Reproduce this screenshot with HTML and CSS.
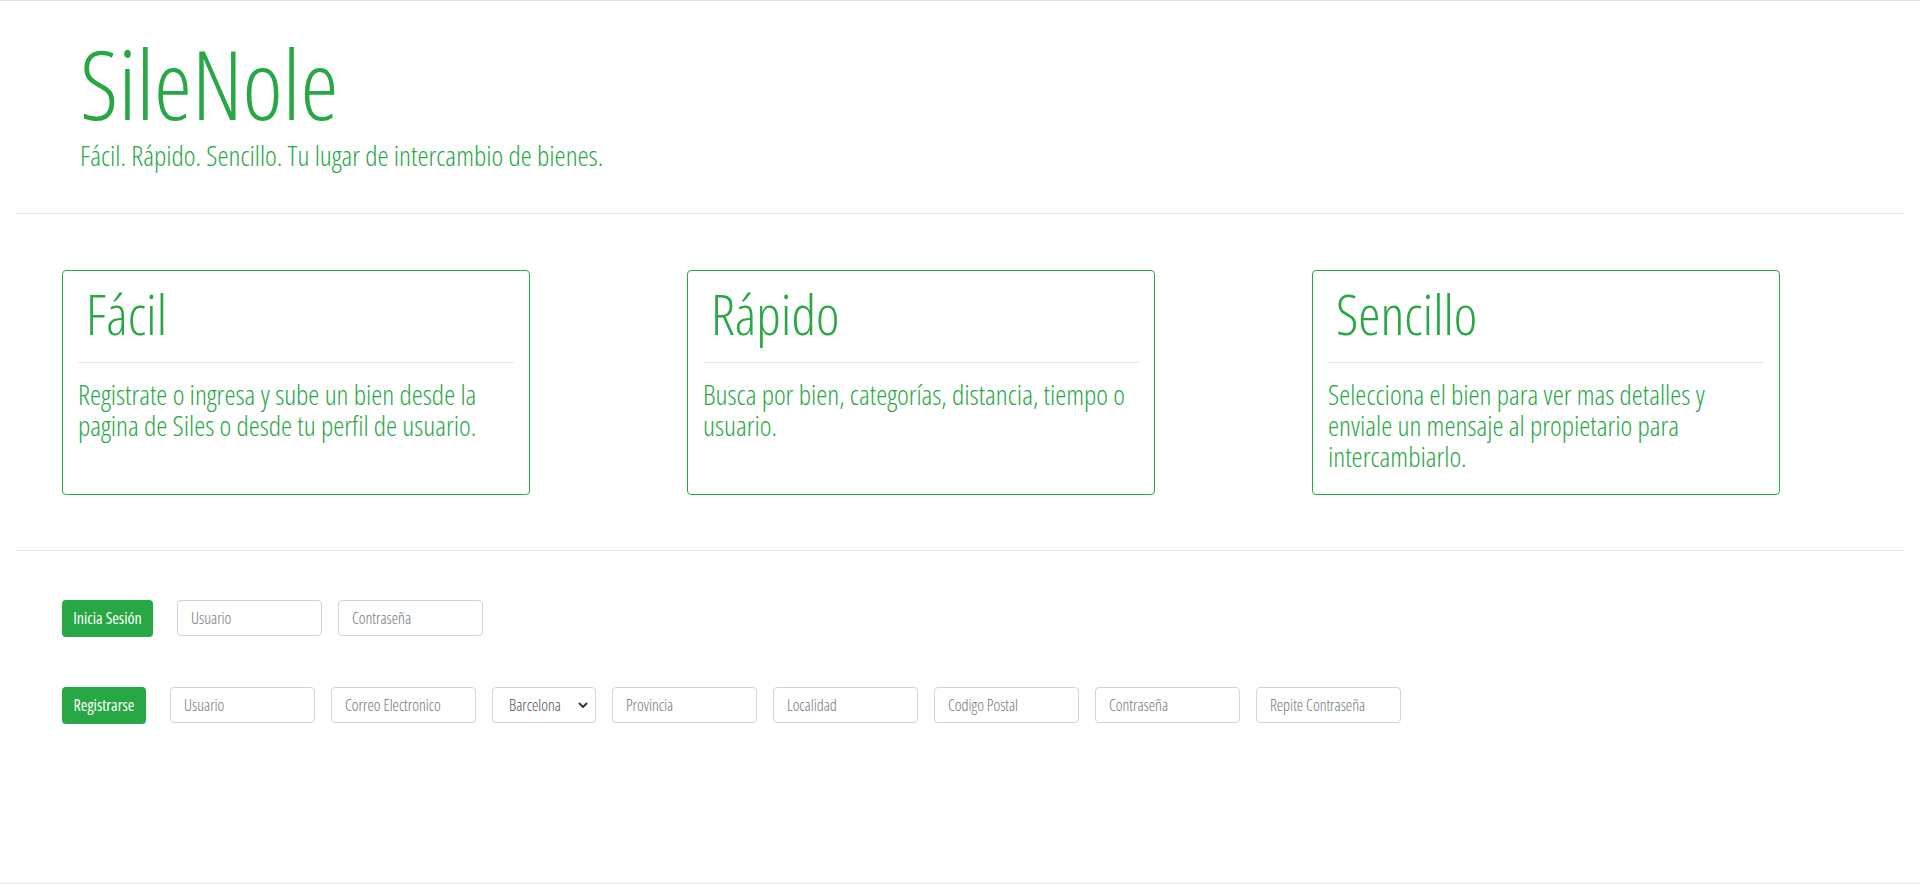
FILE: index.html
```html
<!DOCTYPE html>
<html lang="es">
<head>
<meta charset="utf-8">
<title>SileNole</title>
<link rel="stylesheet" href="styles.css">
</head>
<body>
<div class="page">
  <header class="hero">
    <h1 class="brand">SileNole</h1>
    <p class="tagline">Fácil. Rápido. Sencillo. Tu lugar de intercambio de bienes.</p>
  </header>
  <hr class="divider divider-top">
  <section class="features">
    <div class="card">
      <h2 class="card-title">Fácil</h2>
      <hr class="card-rule">
      <p class="card-text">Registrate o ingresa y sube un bien desde la pagina de Siles o desde tu perfil de usuario.</p>
    </div>
    <div class="card">
      <h2 class="card-title">Rápido</h2>
      <hr class="card-rule">
      <p class="card-text">Busca por bien, categorías, distancia, tiempo o usuario.</p>
    </div>
    <div class="card">
      <h2 class="card-title">Sencillo</h2>
      <hr class="card-rule">
      <p class="card-text">Selecciona el bien para ver mas detalles y enviale un mensaje al propietario para intercambiarlo.</p>
    </div>
  </section>
  <hr class="divider divider-bottom">
  <form class="form-row form-login">
    <button type="button" class="btn btn-login">Inicia Sesión</button>
    <input class="field" type="text" placeholder="Usuario">
    <input class="field" type="password" placeholder="Contraseña">
  </form>
  <form class="form-row form-register">
    <button type="button" class="btn btn-register">Registrarse</button>
    <input class="field" type="text" placeholder="Usuario">
    <input class="field" type="email" placeholder="Correo Electronico">
    <div class="select-wrap">
      <select class="field select">
        <option>Barcelona</option>
      </select>
      <svg class="chevron" width="10" height="7" viewBox="0 0 10 7" aria-hidden="true"><path d="M1.5 1.5 L5 5 L8.5 1.5" fill="none" stroke="#343a40" stroke-width="2" stroke-linecap="round" stroke-linejoin="round"/></svg>
    </div>
    <input class="field" type="text" placeholder="Provincia">
    <input class="field" type="text" placeholder="Localidad">
    <input class="field" type="text" placeholder="Codigo Postal">
    <input class="field" type="password" placeholder="Contraseña">
    <input class="field" type="password" placeholder="Repite Contraseña">
  </form>
</div>
</body>
</html>
```
FILE: styles.css
```css
* {
  box-sizing: border-box;
}

html, body {
  margin: 0;
  padding: 0;
}

body {
  font-family: "Open Sans", "Liberation Sans", sans-serif;
  font-stretch: 75%;
  font-weight: 300;
  color: #28a745;
  background: #fff;
  min-height: 100vh;
  border-top: 1px solid #dee2e6;
  border-bottom: 1px solid #e6e6e6;
}

.page {
  padding: 0 15px;
}

.hero {
  padding: 29px 0 0 65px;
}

.brand {
  margin: 0;
  font-size: 96px;
  font-weight: 300;
  line-height: 106px;
  color: #28a745;
}

.tagline {
  margin: 3px 0 0;
  font-size: 28px;
  line-height: 1.2;
  font-weight: 300;
}

.divider {
  border: 0;
  border-top: 1px solid #e6e6e6;
  margin: 0;
}

.divider-top {
  margin-top: 40px;
}

.features {
  display: flex;
  gap: 157px;
  padding: 56px 0 0 47px;
}

.card {
  width: 468px;
  height: 225px;
  border: 1px solid #28a745;
  border-radius: 4px;
  padding: 9px 15px 0;
}

.card-title {
  margin: 0;
  padding-left: 8px;
  font-size: 56px;
  font-weight: 300;
  line-height: 1.2;
}

.card-rule {
  border: 0;
  border-top: 1px solid #e6e6e6;
  margin: 15px 0 0;
}

.card-text {
  margin: 16px 0 0;
  font-size: 28px;
  line-height: 31px;
  font-weight: 300;
}

.divider-bottom {
  margin-top: 55px;
}

.form-row {
  display: flex;
  align-items: center;
  padding-left: 47px;
  margin: 0;
}

.form-login {
  margin-top: 49px;
}

.form-register {
  margin-top: 50px;
}

.btn {
  height: 37px;
  border: 0;
  border-radius: 4px;
  background: #28a745;
  color: #fff;
  font-family: inherit;
  font-stretch: 75%;
  font-weight: 400;
  font-size: 16px;
  padding: 0 10px;
  margin-right: 24px;
  white-space: nowrap;
  cursor: pointer;
}

.btn-login {
  width: 91px;
}

.btn-register {
  width: 84px;
}

.field {
  width: 145px;
  height: 36px;
  border: 1px solid #ced4da;
  border-radius: 4px;
  padding: 0 13px;
  margin-right: 16px;
  font-family: inherit;
  font-stretch: 75%;
  font-weight: 300;
  font-size: 16px;
  color: #495057;
  background: #fff;
  outline: none;
}

.field::placeholder {
  color: #6c757d;
}

.select-wrap {
  position: relative;
  margin-right: 16px;
}

.select {
  width: 104px;
  margin-right: 0;
  padding: 0 24px 0 16px;
  appearance: none;
  -webkit-appearance: none;
}

.chevron {
  position: absolute;
  right: 8px;
  top: 15px;
  pointer-events: none;
}
```
